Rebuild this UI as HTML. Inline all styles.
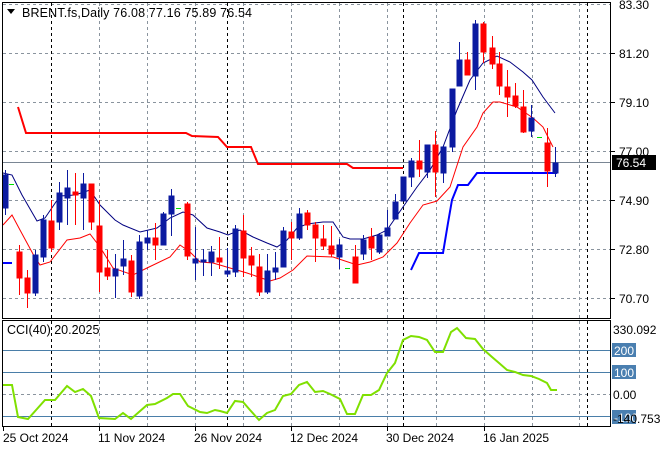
<!DOCTYPE html>
<html><head><meta charset="utf-8"><style>
html,body{margin:0;padding:0;background:#fff;}
svg{display:block;font-family:"Liberation Sans",sans-serif;}
</style></head><body>
<svg width="660" height="450" viewBox="0 0 660 450" xmlns="http://www.w3.org/2000/svg">
<rect width="660" height="450" fill="#fff"/>
<g stroke="#8a949e" stroke-width="1" stroke-dasharray="3,3" fill="none">
<line x1="3" y1="53.5" x2="610" y2="53.5"/>
<line x1="3" y1="102.5" x2="610" y2="102.5"/>
<line x1="3" y1="151.5" x2="610" y2="151.5"/>
<line x1="3" y1="200.5" x2="610" y2="200.5"/>
<line x1="3" y1="249.5" x2="610" y2="249.5"/>
<line x1="3" y1="298.5" x2="610" y2="298.5"/>
<line x1="3" y1="4.5" x2="610" y2="4.5"/>
<line x1="3" y1="394.5" x2="610" y2="394.5"/>
<line x1="99.5" y1="3" x2="99.5" y2="426"/>
<line x1="147.5" y1="3" x2="147.5" y2="426"/>
<line x1="195.5" y1="3" x2="195.5" y2="426"/>
<line x1="243.5" y1="3" x2="243.5" y2="426"/>
<line x1="291.5" y1="3" x2="291.5" y2="426"/>
<line x1="339.5" y1="3" x2="339.5" y2="426"/>
<line x1="387.5" y1="3" x2="387.5" y2="426"/>
<line x1="436.5" y1="3" x2="436.5" y2="426"/>
<line x1="484.5" y1="3" x2="484.5" y2="426"/>
<line x1="532.5" y1="3" x2="532.5" y2="426"/>
<line x1="579.5" y1="3" x2="579.5" y2="426"/>
</g>
<g stroke="#000" stroke-width="1" stroke-dasharray="3,3">
<line x1="51.5" y1="3" x2="51.5" y2="426"/>
<line x1="227.5" y1="3" x2="227.5" y2="426"/>
<line x1="403.5" y1="3" x2="403.5" y2="426"/>
<line x1="587.5" y1="3" x2="587.5" y2="426"/>
</g>
<g stroke="#4a7ea8" stroke-width="1">
<line x1="3" y1="350.5" x2="610" y2="350.5"/>
<line x1="3" y1="372.5" x2="610" y2="372.5"/>
<line x1="3" y1="416.5" x2="610" y2="416.5"/>
</g>
<line x1="3" y1="162.5" x2="610" y2="162.5" stroke="#7a8694" stroke-width="1"/>
<polyline fill="none" stroke="#ff0000" stroke-width="2" points="18,107 26,133 186,133 192,136 218,137 227,147 251,147 258,164 347,164 353,168 403,168"/>
<polyline fill="none" stroke="#0000ff" stroke-width="2" points="3,263 12,263"/>
<polyline fill="none" stroke="#0000ff" stroke-width="2" points="411,270 419,253 443,253 448,223 452,200 458,185 468,185 477,173 557,173"/>
<polyline fill="none" stroke="#000080" stroke-width="1" points="3,173 12,175 22,195 37,221 45,218 60,196 75,195 90,190 100,205 115,220 123,225 140,232 157,228 170,218 183,212 193,215 207,228 220,232 228,235 240,230 253,237 267,243 277,247 287,240 297,228 307,224 323,222 333,222 343,237 350,239 363,239 377,235 387,230 403,207 417,187 430,170 443,147 457,110 470,80 483,63 497,56 510,62 523,72 532,80 543,97 555,113"/>
<polyline fill="none" stroke="#ff0000" stroke-width="1" points="3,225 12,215 20,230 33,254 40,265 50,262 67,240 80,238 90,234 100,247 113,268 133,275 147,268 170,257 180,245 190,252 200,262 213,263 230,268 247,273 270,281 280,278 293,270 307,256 333,257 357,265 370,262 383,257 397,243 410,223 423,205 437,201 450,187 463,147 477,127 483,113 493,102 500,102 517,107 533,118 543,127 553,147"/>
<g stroke-width="1" shape-rendering="crispEdges">
<g stroke="#0b1aa0" fill="#0b1aa0">
<line x1="5.5" y1="170" x2="5.5" y2="215"/><rect x="3" y="175" width="5" height="33"/>
<line x1="35.5" y1="250" x2="35.5" y2="296"/><rect x="33" y="255" width="5" height="38"/>
<line x1="43.5" y1="215" x2="43.5" y2="262"/><rect x="41" y="220" width="5" height="37"/>
<line x1="59.5" y1="182" x2="59.5" y2="230"/><rect x="57" y="193" width="5" height="29"/>
<line x1="67.5" y1="170" x2="67.5" y2="225"/><rect x="65" y="188" width="5" height="10"/>
<line x1="83.5" y1="173" x2="83.5" y2="230"/><rect x="81" y="184" width="5" height="14"/>
<line x1="115.5" y1="254" x2="115.5" y2="298"/><rect x="113" y="269" width="5" height="7"/>
<line x1="123.5" y1="240" x2="123.5" y2="275"/><rect x="121" y="259" width="5" height="7"/>
<line x1="139.5" y1="235" x2="139.5" y2="299"/><rect x="137" y="242" width="5" height="54"/>
<line x1="147.5" y1="230" x2="147.5" y2="250"/><rect x="145" y="238" width="5" height="5"/>
<line x1="163.5" y1="212" x2="163.5" y2="245"/><rect x="161" y="214" width="5" height="31"/>
<line x1="171.5" y1="189" x2="171.5" y2="236"/><rect x="169" y="196" width="5" height="18"/>
<line x1="195.5" y1="227" x2="195.5" y2="280"/><rect x="193" y="259" width="5" height="4"/>
<line x1="203.5" y1="249" x2="203.5" y2="276"/><rect x="201" y="260" width="5" height="2"/>
<line x1="211.5" y1="246" x2="211.5" y2="276"/><rect x="209" y="252" width="5" height="10"/>
<line x1="227.5" y1="248" x2="227.5" y2="277"/><rect x="225" y="271" width="5" height="3"/>
<line x1="235.5" y1="225" x2="235.5" y2="277"/><rect x="233" y="229" width="5" height="43"/>
<line x1="267.5" y1="254" x2="267.5" y2="294"/><rect x="265" y="271" width="5" height="21"/>
<line x1="275.5" y1="252" x2="275.5" y2="280"/><rect x="273" y="268" width="5" height="4"/>
<line x1="283.5" y1="227" x2="283.5" y2="267"/><rect x="281" y="231" width="5" height="36"/>
<line x1="299.5" y1="208" x2="299.5" y2="240"/><rect x="297" y="214" width="5" height="24"/>
<line x1="339.5" y1="239" x2="339.5" y2="269"/><rect x="337" y="245" width="5" height="12"/>
<line x1="363.5" y1="235" x2="363.5" y2="260"/><rect x="361" y="240" width="5" height="14"/>
<line x1="379.5" y1="233" x2="379.5" y2="254"/><rect x="377" y="235" width="5" height="17"/>
<line x1="387.5" y1="210" x2="387.5" y2="236"/><rect x="385" y="228" width="5" height="8"/>
<line x1="395.5" y1="194" x2="395.5" y2="219"/><rect x="393" y="202" width="5" height="17"/>
<line x1="403.5" y1="177" x2="403.5" y2="201"/><rect x="401" y="177" width="5" height="24"/>
<line x1="411.5" y1="158" x2="411.5" y2="187"/><rect x="409" y="161" width="5" height="16"/>
<line x1="427.5" y1="145" x2="427.5" y2="178"/><rect x="425" y="145" width="5" height="27"/>
<line x1="443.5" y1="145" x2="443.5" y2="183"/><rect x="441" y="147" width="5" height="26"/>
<line x1="452.5" y1="89" x2="452.5" y2="152"/><rect x="450" y="89" width="5" height="58"/>
<line x1="459.5" y1="42" x2="459.5" y2="86"/><rect x="457" y="60" width="5" height="26"/>
<line x1="475.5" y1="20" x2="475.5" y2="90"/><rect x="473" y="24" width="5" height="52"/>
<line x1="531.5" y1="105" x2="531.5" y2="137"/><rect x="529" y="118" width="5" height="13"/>
<line x1="555.5" y1="147" x2="555.5" y2="177"/><rect x="553" y="163" width="5" height="10"/>
</g>
<g stroke="#ff0000" fill="#ff0000">
<line x1="19.5" y1="245" x2="19.5" y2="295"/><rect x="17" y="252" width="5" height="26"/>
<line x1="27.5" y1="270" x2="27.5" y2="308"/><rect x="25" y="278" width="5" height="15"/>
<line x1="51.5" y1="200" x2="51.5" y2="252"/><rect x="49" y="221" width="5" height="27"/>
<line x1="75.5" y1="173" x2="75.5" y2="225"/><rect x="73" y="192" width="5" height="3"/>
<line x1="91.5" y1="184" x2="91.5" y2="230"/><rect x="89" y="184" width="5" height="38"/>
<line x1="99.5" y1="200" x2="99.5" y2="292"/><rect x="97" y="226" width="5" height="46"/>
<line x1="107.5" y1="250" x2="107.5" y2="280"/><rect x="105" y="268" width="5" height="8"/>
<line x1="131.5" y1="255" x2="131.5" y2="297"/><rect x="129" y="261" width="5" height="31"/>
<line x1="155.5" y1="223" x2="155.5" y2="260"/><rect x="153" y="238" width="5" height="7"/>
<line x1="187.5" y1="202" x2="187.5" y2="260"/><rect x="185" y="204" width="5" height="52"/>
<line x1="219.5" y1="237" x2="219.5" y2="269"/><rect x="217" y="258" width="5" height="4"/>
<line x1="243.5" y1="215" x2="243.5" y2="277"/><rect x="241" y="231" width="5" height="27"/>
<line x1="251.5" y1="247" x2="251.5" y2="277"/><rect x="249" y="256" width="5" height="9"/>
<line x1="259.5" y1="254" x2="259.5" y2="296"/><rect x="257" y="267" width="5" height="25"/>
<line x1="291.5" y1="222" x2="291.5" y2="260"/><rect x="289" y="232" width="5" height="6"/>
<line x1="307.5" y1="210" x2="307.5" y2="230"/><rect x="305" y="213" width="5" height="12"/>
<line x1="315.5" y1="222" x2="315.5" y2="262"/><rect x="313" y="225" width="5" height="13"/>
<line x1="323.5" y1="225" x2="323.5" y2="250"/><rect x="321" y="239" width="5" height="7"/>
<line x1="331.5" y1="226" x2="331.5" y2="257"/><rect x="329" y="246" width="5" height="8"/>
<line x1="355.5" y1="245" x2="355.5" y2="283"/><rect x="353" y="257" width="5" height="26"/>
<line x1="371.5" y1="228" x2="371.5" y2="260"/><rect x="369" y="237" width="5" height="11"/>
<line x1="419.5" y1="140" x2="419.5" y2="177"/><rect x="417" y="161" width="5" height="8"/>
<line x1="435.5" y1="131" x2="435.5" y2="197"/><rect x="433" y="145" width="5" height="27"/>
<line x1="467.5" y1="52" x2="467.5" y2="75"/><rect x="465" y="60" width="5" height="15"/>
<line x1="483.5" y1="22" x2="483.5" y2="63"/><rect x="481" y="24" width="5" height="28"/>
<line x1="492.5" y1="36" x2="492.5" y2="69"/><rect x="490" y="48" width="5" height="16"/>
<line x1="499.5" y1="52" x2="499.5" y2="95"/><rect x="497" y="64" width="5" height="22"/>
<line x1="507.5" y1="70" x2="507.5" y2="117"/><rect x="505" y="87" width="5" height="10"/>
<line x1="515.5" y1="83" x2="515.5" y2="108"/><rect x="513" y="96" width="5" height="10"/>
<line x1="523.5" y1="90" x2="523.5" y2="133"/><rect x="521" y="107" width="5" height="25"/>
<line x1="547.5" y1="128" x2="547.5" y2="187"/><rect x="545" y="143" width="5" height="28"/>
</g>
<g stroke="#00e000">
<line x1="9" y1="184.5" x2="14" y2="184.5"/>
<line x1="176" y1="208.5" x2="181" y2="208.5"/>
<line x1="345" y1="268.5" x2="350" y2="268.5"/>
<line x1="537" y1="137.5" x2="542" y2="137.5"/>
</g>
</g>
<polyline fill="none" stroke="#7fe000" stroke-width="2" points="3,385 12,385 18,417 28,419 45,400 55,400 67,386 75,392 83,389 91,396 99,418 115,419 123,413 131,419 147,405 155,404 167,398 173,394 180,394 188,406 200,412 207,413 215,410 220,411 227,413 235,401 243,402 250,410 259,420 267,413 275,410 283,396 291,394 299,385 307,382 315,392 323,391 330,394 340,399 347,414 355,414 363,395 371,395 379,390 387,373 395,363 403,340 411,336 419,337 427,340 435,352 443,352 451,332 457,328 466,338 475,339 483,349 492,357 499,363 507,370 515,372 523,375 531,376 539,379 547,383 551,390 557,390"/>
<g fill="none" stroke="#000" stroke-width="1">
<rect x="2.5" y="2.5" width="608" height="316"/>
<rect x="2.5" y="320.5" width="608" height="106"/>
</g>
<g stroke="#000">
<line x1="611" y1="53.5" x2="615" y2="53.5"/><line x1="611" y1="102.5" x2="615" y2="102.5"/><line x1="611" y1="151.5" x2="615" y2="151.5"/><line x1="611" y1="200.5" x2="615" y2="200.5"/><line x1="611" y1="249.5" x2="615" y2="249.5"/><line x1="611" y1="298.5" x2="615" y2="298.5"/>
<line x1="3.5" y1="427" x2="3.5" y2="431"/><line x1="99.5" y1="427" x2="99.5" y2="431"/><line x1="195.5" y1="427" x2="195.5" y2="431"/><line x1="291.5" y1="427" x2="291.5" y2="431"/><line x1="387.5" y1="427" x2="387.5" y2="431"/><line x1="484.5" y1="427" x2="484.5" y2="431"/>
</g>
<polygon points="7,9 15,9 11,14" fill="#000"/>
<text x="22" y="17" font-size="12.5" letter-spacing="0.15" fill="#000">BRENT.fs,Daily  76.08 77.16 75.89 76.54</text>
<text x="7" y="334" font-size="12.5" fill="#000">CCI(40) 20.2025</text>
<g font-size="12" fill="#000">
<text x="619" y="9">83.30</text>
<text x="619" y="58">81.20</text>
<text x="619" y="107">79.10</text>
<text x="619" y="156">77.00</text>
<text x="619" y="205">74.90</text>
<text x="619" y="254">72.80</text>
<text x="619" y="303">70.70</text>
</g>
<rect x="612" y="155" width="44" height="15" fill="#000"/>
<text x="616" y="167" font-size="12" fill="#fff">76.54</text>
<g font-size="12">
<text x="613" y="334" fill="#000">330.092</text>
<rect x="612" y="343" width="24" height="14" fill="#4a7fb0"/>
<text x="614" y="355" fill="#fff">200</text>
<rect x="612" y="365" width="24" height="14" fill="#4a7fb0"/>
<text x="614" y="377" fill="#fff">100</text>
<text x="613" y="399" fill="#000">0.00</text>
<rect x="612" y="410" width="24" height="14" fill="#4a7fb0"/>
<text x="614" y="422" fill="#fff">-100</text>
<text x="613" y="423" fill="#000">-140.753</text>
</g>
<g font-size="12" fill="#000">
<text x="3" y="442">25 Oct 2024</text>
<text x="98" y="442">11 Nov 2024</text>
<text x="194" y="442">26 Nov 2024</text>
<text x="290" y="442">12 Dec 2024</text>
<text x="386" y="442">30 Dec 2024</text>
<text x="483" y="442">16 Jan 2025</text>
</g>
</svg>
</body></html>
